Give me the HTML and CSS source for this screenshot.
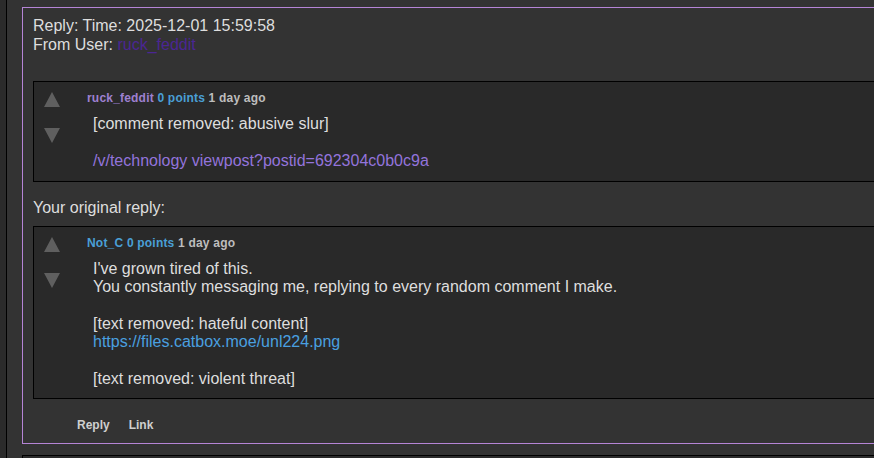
FILE: index.html
```html
<!DOCTYPE html>
<html>
<head>
<meta charset="utf-8">
<link rel="stylesheet" href="styles.css">
</head>
<body>
<div class="panel">
  <div class="reply-box">
    <div class="header">
      <div>Reply: Time: 2025-12-01 15:59:58</div>
      <div>From User: <a class="user-link" href="#">ruck_feddit</a></div>
    </div>

    <div class="comment first">
      <div class="votes">
        <span class="arrow up"></span>
        <span class="arrow down"></span>
      </div>
      <div class="content">
        <div class="meta"><span class="author purple">ruck_feddit</span> <span class="points">0 points</span> <span class="age">1 day ago</span></div>
        <div class="body">
          <p>[comment removed: abusive slur]</p>
          <p><a class="post-link" href="#">/v/technology viewpost?postid=692304c0b0c9a</a></p>
        </div>
      </div>
    </div>

    <div class="orig-label">Your original reply:</div>

    <div class="comment">
      <div class="votes">
        <span class="arrow up"></span>
        <span class="arrow down"></span>
      </div>
      <div class="content">
        <div class="meta"><span class="author blue">Not_C</span> <span class="points">0 points</span> <span class="age">1 day ago</span></div>
        <div class="body">
          <p>I've grown tired of this.<br>You constantly messaging me, replying to every random comment I make.</p>
          <p>[text removed: hateful content]<br><a class="ext-link" href="#">https://files.catbox.moe/unl224.png</a></p>
          <p>[text removed: violent threat]</p>
        </div>
      </div>
    </div>

    <div class="actions">
      <a href="#">Reply</a>
      <a href="#">Link</a>
    </div>
  </div>
  <div class="next-box"></div>
</div>
</body>
</html>
```

FILE: styles.css
```css
html, body {
  margin: 0;
  padding: 0;
  background: #2b2b2b;
  overflow: hidden;
  height: 458px;
}
body {
  font-family: "Liberation Sans", Arial, sans-serif;
  font-size: 16px;
  color: #dedede;
}
a { text-decoration: none; }

.panel {
  margin-left: 6px;
  border-left: 1px solid #000;
  background: #333;
  padding-top: 7px;
  height: 460px;
}

.reply-box {
  margin-left: 15px;
  width: 1000px;
  border: 1px solid #b584d6;
  border-right: none;
  padding: 8px 0 11px 10px;
}

.header {
  line-height: 19px;
}
.user-link { color: #4b2693; }

.comment {
  display: flex;
  background: #292929;
  border: 1px solid #000;
  margin-top: 27px;
}
.comment.first { padding-bottom: 1px; }

.votes {
  width: 53px;
  padding: 10px 0 0 10px;
  box-sizing: border-box;
  display: flex;
  flex-direction: column;
  flex: none;
}
.arrow {
  width: 0;
  height: 0;
  border-left: 8px solid transparent;
  border-right: 8px solid transparent;
}
.arrow.up {
  border-bottom: 15px solid #5f5f5f;
}
.arrow.down {
  border-top: 15px solid #5f5f5f;
  margin-top: 21px;
}

.content {
  padding-top: 10px;
  padding-bottom: 10px;
}
.meta {
  font-size: 12px;
  font-weight: bold;
  line-height: 13px;
  letter-spacing: 0.2px;
}
.author.purple { color: #9e80d0; }
.author.blue { color: #4a9fd6; }
.points { color: #4a9fd6; }
.age { color: #bdbdbd; }

.body {
  margin-left: 6px;
  margin-top: 10px;
  display: flex;
  flex-direction: column;
  gap: 19px;
  line-height: 18px;
}
.body p { margin: 0; }
.post-link { color: #9374dc; }
.ext-link { color: #4aa0e0; }

.orig-label {
  margin-top: 17px;
  line-height: 18px;
}
.orig-label + .comment { margin-top: 9px; }

.actions {
  margin-top: 20px;
  padding-left: 44px;
  display: flex;
  gap: 19px;
  font-size: 12px;
  font-weight: bold;
  line-height: 13px;
}
.actions a { color: #cfcfcf; }

.next-box {
  margin-left: 15px;
  margin-top: 11px;
  height: 40px;
  border-top: 1px solid #000;
  border-left: 1px solid #000;
  background: #2b2b2b;
}
```
